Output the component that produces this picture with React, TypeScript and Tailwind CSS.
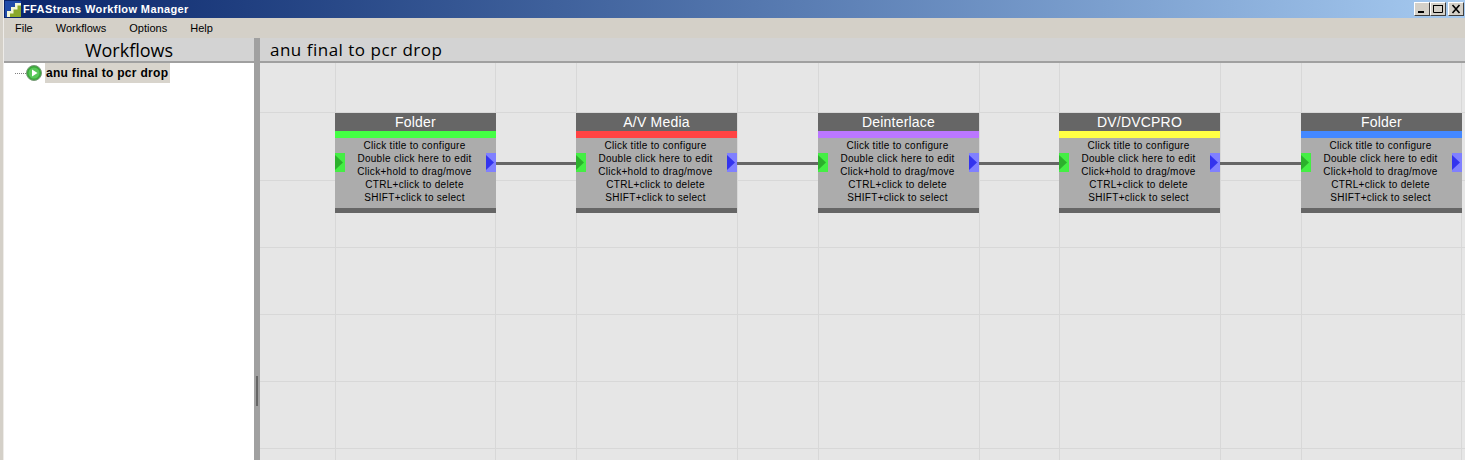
const FONT = "font-['Liberation_Sans',Arial,sans-serif]";

const nodes = [
  { title: "Folder", bar: "bg-[#44ff44]", gap: "w-[80px]" },
  { title: "A/V Media", bar: "bg-[#ff4444]", gap: "w-[81px]" },
  { title: "Deinterlace", bar: "bg-[#bb77ff]", gap: "w-[80px]" },
  { title: "DV/DVCPRO", bar: "bg-[#ffff44]", gap: "w-[81px]" },
  { title: "Folder", bar: "bg-[#4488ff]", gap: "" },
];

const hints = [
  "Click title to configure",
  "Double click here to edit",
  "Click+hold to drag/move",
  "CTRL+click to delete",
  "SHIFT+click to select",
];

const gridX = [335, 495, 576, 737, 818, 979, 1059, 1220, 1301, 1461];
const gridY = [112, 180, 247, 314, 381, 448];

function AppIcon() {
  return (
    <svg width="16" height="16" viewBox="0 0 16 16" className="shrink-0">
      <rect x="0" y="0" width="16" height="16" fill="#1f4aa8" />
      <path d="M2 16V10H6V6H10V2H16V16Z" fill="#f2f6d8" />
      <path d="M5 16V12.5H8.5V8.5H12.5V4.5H16V16Z" fill="#8aa82c" />
    </svg>
  );
}

function CaptionButton({ kind }: { kind: "min" | "max" | "close" }) {
  return (
    <div className="flex h-[14px] w-[16px] items-center justify-center border border-t-white border-l-white border-r-[#404040] border-b-[#404040] bg-[#d4d0c8]">
      <svg width="12" height="10" viewBox="0 0 12 10">
        {kind === "min" && <rect x="2" y="7" width="6" height="2" fill="#000" />}
        {kind === "max" && <path d="M1.5 1.5H10.5V8.5H1.5Z M1 1.5H11" fill="none" stroke="#000" strokeWidth="1" />}
        {kind === "close" && <path d="M2.5 1L9.5 9M9.5 1L2.5 9" fill="none" stroke="#000" strokeWidth="1.6" />}
      </svg>
    </div>
  );
}

function Node({ title, bar }: { title: string; bar: string }) {
  return (
    <div className="relative h-[100px] w-[161px] shrink-0 bg-[#acacac]">
      <div className="flex h-[18px] items-center justify-center bg-[#666666] text-[14px] tracking-[0.2px] text-white">
        {title}
      </div>
      <div className={`h-[7px] ${bar}`} />
      <div className="flex h-[70px] flex-col pt-px pr-[2px] text-center text-[10px] leading-[13px] tracking-[0.3px] text-black">
        {hints.map((h) => (
          <div key={h}>{h}</div>
        ))}
      </div>
      <div className="h-[5px] bg-[#666666]" />
      {/* in and out ports sit on top of the node body */}
      <div className="absolute left-0 top-[40px] flex h-[19px] w-[10px] items-center bg-[#44ee44]">
        <svg width="8" height="15" viewBox="0 0 8 15">
          <path d="M0 0L8 7.5L0 15Z" fill="#2cb02c" />
        </svg>
      </div>
      <div className="absolute right-0 top-[40px] flex h-[19px] w-[10px] items-center bg-[#8080ff]">
        <svg width="8" height="15" viewBox="0 0 8 15">
          <path d="M0 0L8 7.5L0 15Z" fill="#3333ee" />
        </svg>
      </div>
    </div>
  );
}

export default function App() {
  return (
    <div className={`flex h-[460px] w-[1465px] overflow-hidden bg-[#d4d0c8] ${FONT}`}>
      {/* window frame */}
      <div className="w-[4px] shrink-0 border-r border-white/60 bg-[#d4d0c8]" />
      <div className="flex min-w-0 flex-1 flex-col">
        <div className="flex h-[18px] shrink-0 items-center bg-gradient-to-r from-[#0a246a] to-[#a6caf0] pl-px pr-[1px]">
          <AppIcon />
          <span className="ml-[2px] flex-1 text-[11px] font-bold tracking-[0.39px] text-white">
            FFAStrans Workflow Manager
          </span>
          <div className="flex items-center">
            <CaptionButton kind="min" />
            <CaptionButton kind="max" />
            <div className="w-[2px]" />
            <CaptionButton kind="close" />
          </div>
        </div>

        <div className="flex h-[20px] shrink-0 items-center gap-[23px] bg-[#d4d0c8] pl-[11px] text-[11px] text-black">
          <span>File</span>
          <span>Workflows</span>
          <span>Options</span>
          <span>Help</span>
        </div>

        <div className="flex min-h-0 flex-1">
          {/* workflow tree */}
          <div className="flex w-[250px] shrink-0 flex-col bg-white">
            <div className="flex h-[25px] shrink-0 items-center justify-center border-b-2 border-[#a0a0a0] bg-[#d3d3d3] pt-px font-['Open_Sans',sans-serif] text-[18px] text-black">
              Workflows
            </div>
            <div className="flex h-[20px] items-center pl-[11px]">
              <div className="w-[11px] border-t border-dotted border-[#808080]" />
              <svg width="16" height="16" viewBox="0 0 16 16" className="shrink-0">
                <circle cx="8" cy="8" r="7.5" fill="#3aa83a" stroke="#7a9a7a" />
                <circle cx="8" cy="8" r="5.5" fill="#58c858" />
                <path d="M6 4.5L11.5 8L6 11.5Z" fill="#ffffff" />
              </svg>
              <span className="ml-[3px] flex h-[20px] w-[125px] items-center bg-[#d8d4cc] pl-px text-[12px] font-bold tracking-[0.3px] text-black">
                anu final to pcr drop
              </span>
            </div>
          </div>

          {/* splitter */}
          <div className="flex w-[6px] shrink-0 items-end bg-[#a0a0a0] pb-[54px] pl-[2px]">
            <div className="h-[30px] w-[2px] bg-[#666666]" />
          </div>

          {/* workflow canvas */}
          <div className="flex min-w-0 flex-1 flex-col">
            <div className="flex h-[25px] shrink-0 items-center border-b-2 border-[#a0a0a0] bg-[#d3d3d3] pl-[10px] pt-px font-['Open_Sans',sans-serif] text-[17px] tracking-[0.5px] text-black">
              anu final to pcr drop
            </div>
            <div className="relative min-h-0 flex-1 overflow-hidden bg-[#e6e6e6]">
              {/* grid behind the nodes, coordinates are relative to the page */}
              <svg className="absolute left-[-260px] top-[-63px]" width="1465" height="460">
                {gridX.map((x) => (
                  <line key={x} x1={x + 0.5} x2={x + 0.5} y1="63" y2="460" stroke="#d8d8d8" />
                ))}
                {gridY.map((y) => (
                  <line key={y} y1={y + 0.5} y2={y + 0.5} x1="260" x2="1465" stroke="#d8d8d8" />
                ))}
              </svg>
              <div className="relative flex w-[1205px] pl-[75px] pt-[50px]">
                {nodes.map((n, i) => (
                  <div key={i} className="flex shrink-0 items-start">
                    <Node title={n.title} bar={n.bar} />
                    {n.gap && (
                      <div className={`mt-[49px] h-[3px] shrink-0 bg-[#666666] ${n.gap}`} />
                    )}
                  </div>
                ))}
              </div>
            </div>
          </div>
        </div>
      </div>
    </div>
  );
}
